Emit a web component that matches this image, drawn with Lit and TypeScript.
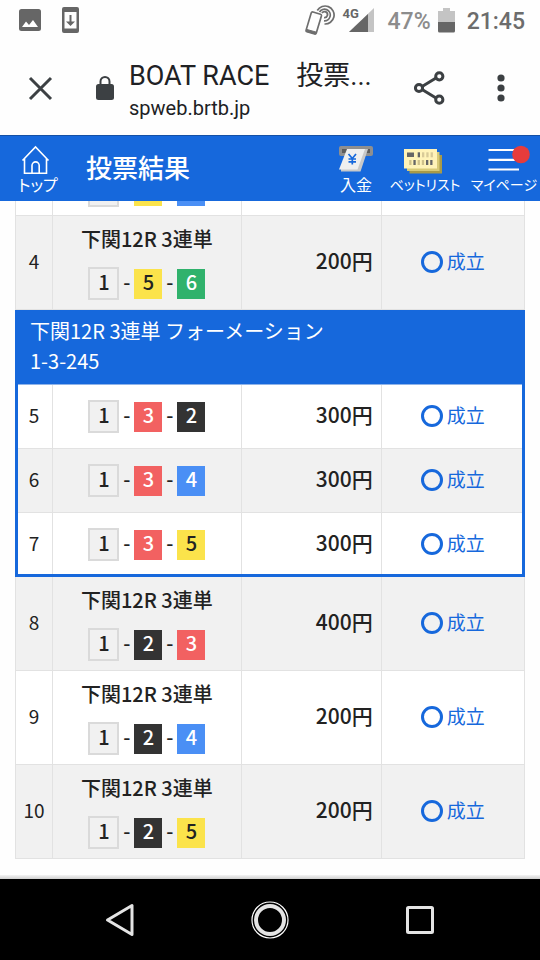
import { LitElement, html, css, svg } from "lit";
import { customElement } from "lit/decorators.js";

interface Bet {
  no: number;
  race?: string;
  boats: number[];
  amount: string;
}

const RACE = "下関12R 3連単";

const before: Bet[] = [{ no: 4, race: RACE, boats: [1, 5, 6], amount: "200" }];
const formation: Bet[] = [
  { no: 5, boats: [1, 3, 2], amount: "300" },
  { no: 6, boats: [1, 3, 4], amount: "300" },
  { no: 7, boats: [1, 3, 5], amount: "300" },
];
const after: Bet[] = [
  { no: 8, race: RACE, boats: [1, 2, 3], amount: "400" },
  { no: 9, race: RACE, boats: [1, 2, 4], amount: "200" },
  { no: 10, race: RACE, boats: [1, 2, 5], amount: "200" },
];

@customElement("status-bar")
class StatusBar extends LitElement {
  static styles = css`
    :host {
      display: flex;
      align-items: center;
      height: 40px;
      padding: 0 15px 0 19px;
      font-family: Roboto, sans-serif;
      color: #666;
    }
    svg { display: block; flex: none; }
    .left { display: flex; align-items: center; gap: 21px; flex: 1; }
    .right { display: flex; align-items: center; }
    .signal { display: grid; margin: 0 14px 0 8px; }
    .signal > * { grid-area: 1 / 1; }
    .net { font-size: 13px; line-height: 12px; font-weight: 700; }
    .pct, .time { padding-top: 3px; font-size: 23px; line-height: 28px; font-weight: 500; }
    .pct { margin-right: 7px; color: #8c8c8c; }
    .time { margin-left: 12px; color: #6c6c6c; }
  `;
  render() {
    return html`
      <div class="left">
        <svg width="22" height="22" viewBox="0 0 22 22">
          <rect width="22" height="22" rx="2.5" fill="#666" />
          <path d="M3 18 7 12.5 10 16 14 11 19 18Z" fill="#fff" />
        </svg>
        <svg width="17" height="26" viewBox="0 0 17 26">
          <path fill="#666" fill-rule="evenodd" d="M2 0h13a2 2 0 0 1 2 2v22a2 2 0 0 1-2 2H2a2 2 0 0 1-2-2V2a2 2 0 0 1 2-2ZM2.500 5v16.500h12V5Z" />
          <path fill="#666" d="M7.500 8h2v6.500h3.500L8.500 19 4 14.500h3.500Z" />
        </svg>
      </div>
      <div class="right">
        <svg width="30" height="30" viewBox="0 0 30 30" fill="none" stroke="#6e6e6e">
          <path d="M8 7 15.500 9.300Q16.700 9.700 16.400 11L11.300 28Q10.800 29.300 9.600 29L2 26.800Q.8 26.400 1.100 25.100L6.200 8Q6.700 6.700 8 7Z" stroke-width="1.700" />
          <path d="M2 24.500 11.500 27.200 10.500 29 1.500 26.500Z" fill="#6e6e6e" stroke-width="1" />
          <path d="M12.300 5.500A9 9 0 1 1 19.500 19M14.500 7A5.800 5.800 0 1 1 19 15.800" stroke-width="1.700" />
          <path d="M17 8A3 3 0 1 1 19 12.600" stroke-width="1.800" />
        </svg>
        <div class="signal">
          <svg width="31" height="25" viewBox="0 0 31 25">
            <path d="M31 0V24H6Z" fill="#c4c4c4" />
            <path d="M25 6V24H6Z" fill="#666" />
          </svg>
          <span class="net">4G</span>
        </div>
        <span class="pct">47%</span>
        <svg width="17" height="25" viewBox="0 0 17 25">
          <path d="M5 0h7v3h5v11H0V3h5Z" fill="#c4c4c4" />
          <path d="M0 14h17v9q0 1.500-1.500 1.500H1.500Q0 24.500 0 23Z" fill="#666" />
        </svg>
        <span class="time">21:45</span>
      </div>
    `;
  }
}

@customElement("browser-bar")
class BrowserBar extends LitElement {
  static styles = css`
    :host {
      display: flex;
      align-items: center;
      height: 95px;
      padding: 0 24px 0 26px;
      box-sizing: border-box;
      color: #202124;
      font-family: Roboto, "Noto Sans CJK JP", sans-serif;
    }
    button { display: block; padding: 0; border: 0; background: none; flex: none; }
    svg { display: block; flex: none; }
    .lock { margin: 0 15px 0 42px; }
    .page { flex: 1; min-width: 0; padding-top: 6px; }
    .title { font-size: 27px; line-height: 34px; white-space: nowrap; }
    .url { font-size: 20px; line-height: 30px; }
    .more { margin-left: 40px; }
  `;
  render() {
    return html`
      <button aria-label="閉じる">
        <svg width="28" height="28" viewBox="0 0 28 28"><path d="M4 4 25 25M25 4 4 25" stroke="#3c4043" stroke-width="3" /></svg>
      </button>
      <svg class="lock" width="18" height="24" viewBox="0 0 18 24">
        <rect y="8" width="18" height="16" rx="2.500" fill="#3c4043" />
        <path d="M4.500 9V5.500a4.500 4.500 0 0 1 9 0V9" fill="none" stroke="#3c4043" stroke-width="2" />
      </svg>
      <div class="page">
        <div class="title">BOAT RACE　投票...</div>
        <div class="url">spweb.brtb.jp</div>
      </div>
      <button aria-label="共有">
        <svg width="32" height="34" viewBox="0 0 32 34" fill="none" stroke="#3c4043" stroke-width="3">
          <path d="M8.500 15.200 22 7M8.500 18.800 22 27" />
          <circle cx="5" cy="17" r="3.600" /><circle cx="25.300" cy="5.300" r="3.600" /><circle cx="25.300" cy="28.700" r="3.600" />
        </svg>
      </button>
      <button class="more" aria-label="メニュー">
        <svg width="30" height="30" viewBox="0 0 30 30" fill="#3c4043">
          <circle cx="15" cy="5" r="3.600" /><circle cx="15" cy="15" r="3.600" /><circle cx="15" cy="25" r="3.600" />
        </svg>
      </button>
    `;
  }
}

@customElement("site-header")
class SiteHeader extends LitElement {
  static styles = css`
    :host {
      display: flex;
      align-items: center;
      height: 66px;
      box-sizing: border-box;
      border-top: 1px solid #1450a5;
      background: #1668dc;
      color: #fff;
      font-family: "Noto Sans CJK JP", sans-serif;
    }
    a {
      display: flex;
      flex-direction: column;
      align-items: center;
      color: inherit;
      text-decoration: none;
      font-size: 16px;
      line-height: 18px;
      font-feature-settings: "palt";
      white-space: nowrap;
    }
    svg { display: block; height: 30px; }
    h1 { flex: 1; margin: 0; padding-bottom: 4px; font-size: 26px; line-height: 34px; font-weight: 500; }
    nav { display: flex; gap: 4px; padding-right: 1px; }
    .top { width: 76px; margin-right: 10px; }
    .deposit { width: 50px; }
    .bets { width: 80px; font-size: 14px; }
    .mypage { width: 70px; font-size: 14px; }
  `;
  render() {
    const dots = [0, 1, 2, 3, 4, 5];
    return html`
      <a class="top" href="#top">
        <svg width="34" viewBox="0 0 34 30" fill="none" stroke="#fff" stroke-width="1.600">
          <path d="M1.500 15.500 14.500 2 27.500 15.500M3.500 13.500V28.200H25.500V13.500M11 28V20.500a3.600 3.600 0 0 1 7.200 0V28" />
        </svg>
        <span>トップ</span>
      </a>
      <h1>投票結果</h1>
      <nav>
        <a class="deposit" href="#deposit">
          <svg width="34" viewBox="0 0 34 30">
            <rect y="1" width="34" height="10" rx="2" fill="#8f8f8f" />
            <rect x="3" y="4" width="28" height="4" fill="#5c5c5c" />
            <path d="M11 4H29L21.500 26.500H2V24Z" fill="#c9c9c9" />
            <path d="M8 4H26L18.500 24.500H0Z" fill="#efefef" />
            <path d="M9.500 9 13.300 13.500 17 9M9.500 14H17M9.500 16.800H17M13.300 14V19.500" fill="none" stroke="#1668dc" stroke-width="1.700" />
          </svg>
          <span>入金</span>
        </a>
        <a class="bets" href="#bets">
          <svg width="44" viewBox="0 0 44 30">
            <rect x="6.500" y="10" width="32.500" height="18.500" fill="#a89a48" />
            <rect x="4" y="7" width="32.500" height="19" fill="#d8ca78" />
            <rect x="1" y="4" width="33" height="19.500" fill="#fff3b8" />
            <rect x="4" y="7.500" width="7" height="4.500" fill="#666" />
            ${dots.slice(0, 4).map((i) => svg`<rect x=${14.7 + i * 4.3} y="7.300" width="2.300" height="5" fill=${i === 0 ? "#666" : "#d8ca98"} />`)}
            ${dots.map((i) => svg`<rect x=${6.2 + i * 4.2} y="15" width="2.300" height="5" fill=${i === 0 || i === 2 || i === 3 ? "#cfc18a" : "#666"} />`)}
          </svg>
          <span>ベットリスト</span>
        </a>
        <a class="mypage" href="#mypage">
          <svg width="52" viewBox="0 0 52 30">
            <path d="M10.500 5H41M10.500 14.800H41M10.500 24.500H41" stroke="#fff" stroke-width="2.200" />
            <circle cx="43" cy="9.500" r="8.800" fill="#e63c3c" />
          </svg>
          <span>マイページ</span>
        </a>
      </nav>
    `;
  }
}

@customElement("bet-table")
class BetTable extends LitElement {
  static styles = css`
    :host { display: block; color: #222; font-family: "Noto Sans CJK JP", sans-serif; }
    table { width: 100%; table-layout: fixed; border-collapse: separate; border-spacing: 0; }
    .c-no { width: 38px; }
    .c-bet { width: 37%; }
    .c-amount { width: 140px; }
    td, th { box-sizing: border-box; padding: 0; border: 0 solid #e2e2e2; border-width: 0 1px 1px 0; }
    td:first-child { border-left-width: 1px; }
    tr { background: #fff; }
    .alt { background: #f1f1f1; }
    .tall td { height: 94px; }
    .short td { height: 64px; }
    td.no { padding-bottom: 4px; font-size: 19px; line-height: 28px; text-align: center; }
    .race { font-size: 20px; line-height: 28px; font-weight: 500; text-align: center; margin-bottom: 14px; }
    .boats { display: flex; justify-content: center; align-items: center; height: 33px; font-size: 20px; font-weight: 500; }
    .dash { width: 15px; padding-bottom: 4px; text-align: center; }
    .boat { width: 28px; height: 30px; line-height: 26px; text-align: center; color: #fff; }
    .b1 { box-sizing: border-box; width: 31px; height: 33px; border: 2px solid #dadada; background: #f1f1f1; color: #222; }
    .b2 { background: #333; }
    .b3 { background: #f26161; }
    .b4 { background: #4a8ff5; }
    .b5 { background: #fbe34b; color: #222; }
    .b6 { background: #30b26c; }
    td.amount { padding: 0 8px 5px 0; text-align: right; font-size: 21px; line-height: 28px; font-weight: 500; }
    td.result { padding-bottom: 2px; color: #1668dc; font-size: 19px; line-height: 24px; }
    .mark { display: flex; justify-content: center; align-items: center; gap: 4px; }
    .mark-text { padding-bottom: 2px; }
    .ring { box-sizing: border-box; width: 22px; height: 22px; border: 3px solid #1668dc; border-radius: 50%; }
    .group { outline: 3px solid #1668dc; outline-offset: -3px; }
    .group th {
      height: 75px;
      padding: 0 15px 2px;
      border-color: #8fb3e8;
      background: #1668dc;
      color: #fff;
      font-size: 20px;
      line-height: 30px;
      font-weight: 400;
      text-align: left;
    }
    .tail td { height: 15px; vertical-align: top; }
    .tail .boats { height: 6px; align-items: flex-start; gap: 15px; }
    .tail .boat { height: 5px; }
    .tail .b1 { height: 6px; border-top: 0; }
  `;
  row(b: Bet) {
    return html`
      <tr class="${b.race ? "tall" : "short"} ${b.no % 2 ? "" : "alt"}">
        <td class="no">${b.no}</td>
        <td>
          ${b.race ? html`<div class="race">${b.race}</div>` : ""}
          <div class="boats">
            ${b.boats.map((n, i) => html`${i ? html`<span class="dash">-</span>` : ""}<span class="boat b${n}">${n}</span>`)}
          </div>
        </td>
        <td class="amount">${b.amount}円</td>
        <td class="result"><div class="mark"><span class="ring"></span><span class="mark-text">成立</span></div></td>
      </tr>
    `;
  }
  render() {
    return html`
      <table>
        <colgroup><col class="c-no" /><col class="c-bet" /><col class="c-amount" /><col /></colgroup>
        <tbody>
          <tr class="tail">
            <td></td>
            <td><div class="boats">${[1, 5, 4].map((n) => html`<span class="boat b${n}"></span>`)}</div></td>
            <td></td>
            <td></td>
          </tr>
          ${before.map((b) => this.row(b))}
        </tbody>
        <tbody class="group">
          <tr><th colspan="4" scope="rowgroup">${RACE} フォーメーション<br />1-3-245</th></tr>
          ${formation.map((b) => this.row(b))}
        </tbody>
        <tbody>${after.map((b) => this.row(b))}</tbody>
      </table>
    `;
  }
}

@customElement("system-nav")
class SystemNav extends LitElement {
  static styles = css`
    :host {
      display: grid;
      grid-template-columns: repeat(3, 1fr);
      align-items: center;
      justify-items: center;
      height: 81px;
      padding: 0 45px;
      background: #000;
    }
    button { display: block; padding: 0; border: 0; background: none; }
    svg { display: block; fill: none; stroke: #e4e4e4; stroke-width: 3; }
  `;
  render() {
    return html`
      <button aria-label="戻る">
        <svg width="40" height="40" viewBox="0 0 40 40"><path d="M7.500 20 32 5.500V34.500Z" stroke-linejoin="round" /></svg>
      </button>
      <button aria-label="ホーム">
        <svg width="40" height="40" viewBox="0 0 40 40">
          <circle cx="20" cy="20" r="18" stroke-width="1.200" stroke="#fff" /><circle cx="20" cy="20" r="14" stroke-width="4" />
        </svg>
      </button>
      <button aria-label="履歴">
        <svg width="40" height="40" viewBox="0 0 40 40"><rect x="7.500" y="7.500" width="25" height="25" rx="1" /></svg>
      </button>
    `;
  }
}

@customElement("app-root")
class AppRoot extends LitElement {
  static styles = css`
    :host { display: flex; flex-direction: column; min-height: 100vh; background: #fefefe; }
    main { flex: 1; padding: 0 15px 16px; }
    .edge { height: 4px; background: linear-gradient(#f4f4f4, #cfcfcf); }
  `;
  render() {
    return html`
      <status-bar></status-bar>
      <browser-bar></browser-bar>
      <site-header></site-header>
      <main><bet-table></bet-table></main>
      <div class="edge"></div>
      <system-nav></system-nav>
    `;
  }
}
